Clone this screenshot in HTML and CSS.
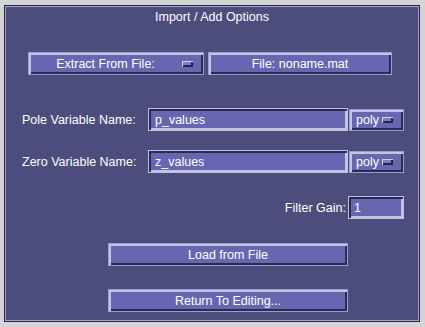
FILE: index.html
```html
<!DOCTYPE html>
<html>
<head>
<meta charset="utf-8">
<link rel="stylesheet" href="styles.css">
</head>
<body>
<div class="panel">
  <div class="title">Import / Add Options</div>
  <div class="row row-top">
    <div class="btn menu wide1"><span class="lbl">Extract From File:</span><span class="ind"></span></div>
    <div class="btn wide2"><span class="lbl">File: noname.mat</span></div>
  </div>
  <div class="row row-var r2">
    <div class="label">Pole Variable Name:</div>
    <div class="field fvar">p_values</div>
    <div class="btn menu poly"><span class="lbl left">poly</span><span class="ind"></span></div>
  </div>
  <div class="row row-var r3">
    <div class="label">Zero Variable Name:</div>
    <div class="field fvar">z_values</div>
    <div class="btn menu poly"><span class="lbl left">poly</span><span class="ind"></span></div>
  </div>
  <div class="row row-gain">
    <div class="label gl">Filter Gain:</div>
    <div class="field fgain">1</div>
  </div>
  <div class="row row-act r5">
    <div class="btn act"><span class="lbl">Load from File</span></div>
  </div>
  <div class="row row-act r6">
    <div class="btn act"><span class="lbl">Return To Editing...</span></div>
  </div>
</div>
</body>
</html>
```
FILE: styles.css
```css
html, body {
  margin: 0;
  padding: 0;
  background: #d4d4d4;
  width: 425px;
  height: 327px;
  overflow: hidden;
}
body {
  font-family: "Liberation Sans", Arial, sans-serif;
  font-size: 12.5px;
  color: #ffffff;
}
.panel {
  box-sizing: border-box;
  margin: 5px 0 0 4px;
  width: 416px;
  height: 317px;
  background: #4d4d7d;
  border: 1px solid #25254a;
  box-shadow: inset 0 0 0 1px #a4a4cc;
  padding: 1px;
  display: flex;
  flex-direction: column;
}
.title {
  height: 20px;
  line-height: 20px;
  text-align: center;
}
.row {
  display: flex;
  align-items: center;
  height: 23px;
}
.row-top { margin-top: 25px; padding-left: 22px; gap: 4px; }
.r2 { margin-top: 33px; }
.r3 { margin-top: 19px; }
.row-var { padding-left: 16px; }
.row-gain { margin-top: 23px; justify-content: flex-end; padding-right: 14px; }
.r5 { margin-top: 24px; }
.r6 { margin-top: 23px; }
.row-act { padding-left: 102px; }

.btn {
  box-sizing: border-box;
  height: 23px;
  background: #6767b1;
  border: 1px solid #9c9cd4;
  box-shadow: inset 2px 2px 0 #c4c4e2, inset -2px -2px 0 #2a2a52;
  display: flex;
  align-items: center;
}
.lbl {
  flex: 1;
  text-align: center;
  white-space: nowrap;
}
.lbl.left { flex: 0 0 auto; text-align: left; margin-left: 6px; margin-right: auto; }
.ind {
  box-sizing: border-box;
  width: 11px;
  height: 6px;
  background: #7d7dc4;
  box-shadow: inset 1px 1px 0 #d0d0ea, inset -2px -2px 0 #23234a;
  margin-right: 10px;
  flex: 0 0 auto;
}
.wide1 { width: 176px; }
.wide2 { width: 184px; }
.poly { width: 55px; height: 22px; margin-left: 1px; }
.act { width: 240px; }

.label {
  width: 126px;
  white-space: nowrap;
}
.gl { width: auto; margin-right: 2px; }

.field {
  box-sizing: border-box;
  height: 23px;
  background: #6767b1;
  border: 1px solid #c0c0dc;
  box-shadow: inset 2px 2px 0 #2a2a52, inset -2px -2px 0 #c4c4e2;
  display: flex;
  align-items: center;
  padding-left: 6px;
  padding-top: 1px;
  white-space: nowrap;
}
.fvar { width: 200px; }
.fgain { width: 56px; padding-left: 5px; }
```
